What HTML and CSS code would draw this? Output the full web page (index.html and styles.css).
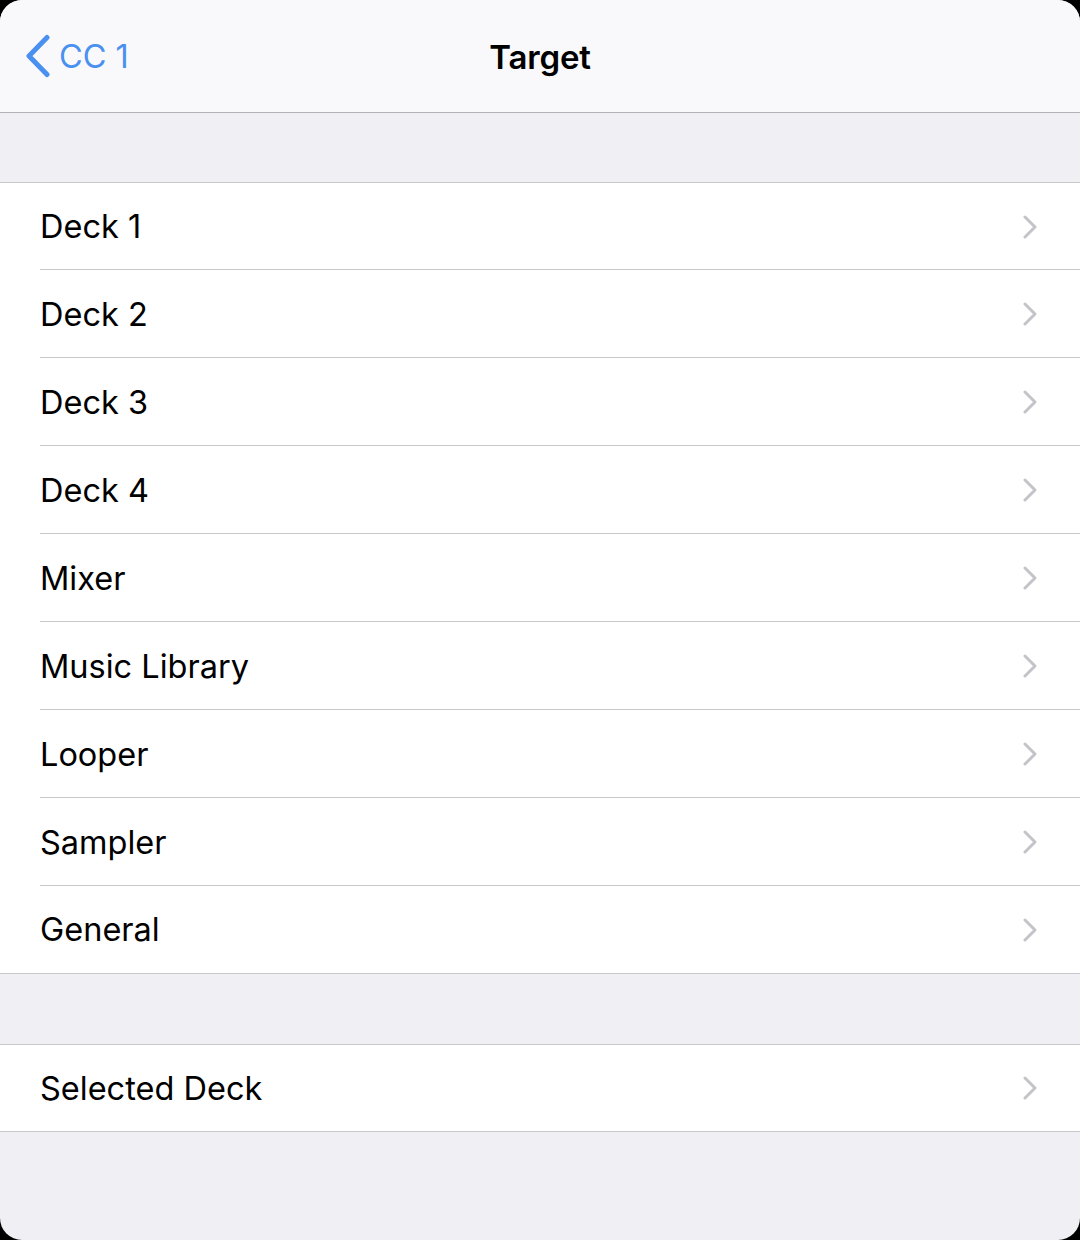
FILE: index.html
```html
<!DOCTYPE html>
<html>
<head>
<meta charset="utf-8">
<link rel="stylesheet" href="styles.css">
</head>
<body>
<div class="screen">
  <header class="nav">
    <div class="back">
      <svg class="back-icon" width="28" height="44" viewBox="0 0 28 44"><path d="M23 3.5 L5 22 L23 40.5" fill="none" stroke="#4a90f0" stroke-width="5" stroke-linecap="round" stroke-linejoin="round"/></svg>
      <span class="back-label">CC 1</span>
    </div>
    <div class="title">Target</div>
  </header>
  <div class="gap"></div>
  <ul class="group">
    <li class="row"><span class="label">Deck 1</span><svg class="chev" width="14" height="24" viewBox="0 0 14 24"><path d="M2 2 L12 12 L2 22" fill="none" stroke="#c4c4c8" stroke-width="3" stroke-linecap="round" stroke-linejoin="round"/></svg></li>
    <li class="row"><span class="label">Deck 2</span><svg class="chev" width="14" height="24" viewBox="0 0 14 24"><path d="M2 2 L12 12 L2 22" fill="none" stroke="#c4c4c8" stroke-width="3" stroke-linecap="round" stroke-linejoin="round"/></svg></li>
    <li class="row"><span class="label">Deck 3</span><svg class="chev" width="14" height="24" viewBox="0 0 14 24"><path d="M2 2 L12 12 L2 22" fill="none" stroke="#c4c4c8" stroke-width="3" stroke-linecap="round" stroke-linejoin="round"/></svg></li>
    <li class="row"><span class="label">Deck 4</span><svg class="chev" width="14" height="24" viewBox="0 0 14 24"><path d="M2 2 L12 12 L2 22" fill="none" stroke="#c4c4c8" stroke-width="3" stroke-linecap="round" stroke-linejoin="round"/></svg></li>
    <li class="row"><span class="label">Mixer</span><svg class="chev" width="14" height="24" viewBox="0 0 14 24"><path d="M2 2 L12 12 L2 22" fill="none" stroke="#c4c4c8" stroke-width="3" stroke-linecap="round" stroke-linejoin="round"/></svg></li>
    <li class="row"><span class="label">Music Library</span><svg class="chev" width="14" height="24" viewBox="0 0 14 24"><path d="M2 2 L12 12 L2 22" fill="none" stroke="#c4c4c8" stroke-width="3" stroke-linecap="round" stroke-linejoin="round"/></svg></li>
    <li class="row"><span class="label">Looper</span><svg class="chev" width="14" height="24" viewBox="0 0 14 24"><path d="M2 2 L12 12 L2 22" fill="none" stroke="#c4c4c8" stroke-width="3" stroke-linecap="round" stroke-linejoin="round"/></svg></li>
    <li class="row"><span class="label">Sampler</span><svg class="chev" width="14" height="24" viewBox="0 0 14 24"><path d="M2 2 L12 12 L2 22" fill="none" stroke="#c4c4c8" stroke-width="3" stroke-linecap="round" stroke-linejoin="round"/></svg></li>
    <li class="row"><span class="label">General</span><svg class="chev" width="14" height="24" viewBox="0 0 14 24"><path d="M2 2 L12 12 L2 22" fill="none" stroke="#c4c4c8" stroke-width="3" stroke-linecap="round" stroke-linejoin="round"/></svg></li>
  </ul>
  <div class="gap gap-2"></div>
  <ul class="group">
    <li class="row"><span class="label">Selected Deck</span><svg class="chev" width="14" height="24" viewBox="0 0 14 24"><path d="M2 2 L12 12 L2 22" fill="none" stroke="#c4c4c8" stroke-width="3" stroke-linecap="round" stroke-linejoin="round"/></svg></li>
  </ul>
  <div class="fill"></div>
</div>
</body>
</html>
```
FILE: styles.css
```css
* { box-sizing: border-box; }
html, body {
  margin: 0;
  padding: 0;
  background: #000;
  height: 1240px;
}
.screen {
  width: 1080px;
  height: 1240px;
  background: #efeff4;
  border-radius: 22px;
  overflow: hidden;
  display: flex;
  flex-direction: column;
  font-family: Inter, "Noto Sans", sans-serif;
  color: #000;
}
.nav {
  height: 113px;
  flex: none;
  background: #f9f9fb;
  border-bottom: 1px solid #b2b2b6;
  position: relative;
  display: flex;
  align-items: center;
}
.back {
  display: flex;
  align-items: center;
  padding-left: 24px;
  gap: 7px;
  margin-top: 0;
}
.back-icon { display: block; }
.back-label {
  color: #4a90f0;
  font-size: 32.5px;
  letter-spacing: 0;
}
.title {
  position: absolute;
  left: 0;
  right: 0;
  top: 0;
  bottom: 0;
  display: flex;
  align-items: center;
  justify-content: center;
  font-size: 33px;
  font-weight: 600;
  letter-spacing: -0.2px;
  pointer-events: none;
  padding-top: 1px;
}
.gap {
  height: 69px;
  flex: none;
}
.gap-2 { height: 70px; }
.group {
  list-style: none;
  margin: 0;
  padding: 0;
  background: #fff;
  border-top: 1px solid #c8c7cc;
  border-bottom: 1px solid #c8c7cc;
}
.row {
  height: 88px;
  display: flex;
  align-items: center;
  justify-content: space-between;
  padding-left: 40px;
  padding-right: 43px;
  position: relative;
}
.row:first-child,
.row:last-child { height: 87px; }
.row:only-child { height: 86px; }
.row:not(:last-child)::after {
  content: "";
  position: absolute;
  bottom: 0;
  left: 40px;
  right: 0;
  height: 1px;
  background: #c8c7cc;
}
.label {
  font-size: 32.5px;
  letter-spacing: 0;
}
.chev { display: block; }
.fill { flex: 1; }
```
